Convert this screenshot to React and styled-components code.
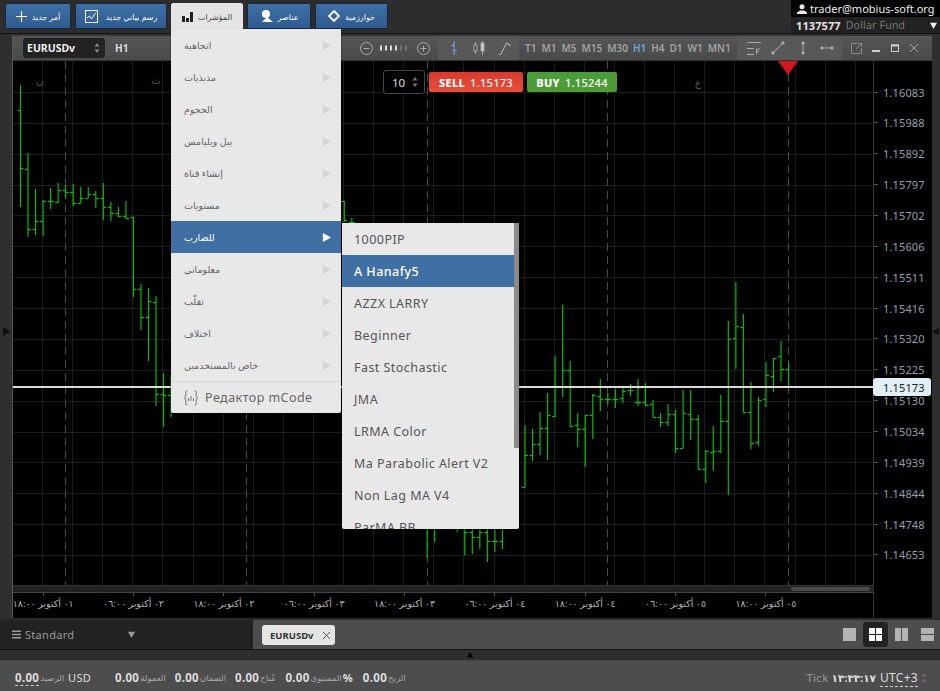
import React from "react";
import styled, { createGlobalStyle } from "styled-components";

const FONT = `"Noto Sans", "DejaVu Sans", sans-serif`;

const GlobalStyle = createGlobalStyle`
  html, body {
    margin: 0;
    padding: 0;
    background: #2b2b2b;
    font-family: ${FONT};
  }
  * { box-sizing: border-box; }
`;

const Page = styled.div`
  position: relative;
  width: 940px;
  height: 691px;
  overflow: hidden;
  display: flex;
  flex-direction: column;
  background: #2b2b2b;
`;

/* top bar */
const TopBar = styled.div`
  height: 34px;
  flex: none;
  display: flex;
  align-items: flex-start;
  gap: 4px;
  padding: 3px 0 0 5px;
  background: #2d2d2d;
  border-bottom: 1px solid #111;
`;

const TopButton = styled.div`
  width: ${p => p.$w}px;
  height: 26px;
  display: flex;
  align-items: center;
  justify-content: center;
  gap: ${p => p.$gap || 5}px;
  font-size: 8px;
  border-radius: 2px 2px 0 0;
  color: ${p => (p.$active ? "#444" : "#fff")};
  background: ${p => (p.$active ? "#e4e4e4" : "linear-gradient(#3f70a6, #2f5b8e)")};
  border: 1px solid ${p => (p.$active ? "#e4e4e4" : "#16263a")};
`;

const Account = styled.div`
  margin: -3px 0 0 auto;
  width: 149px;
  height: 33px;
  display: flex;
  flex-direction: column;
  font-size: 11px;
  white-space: nowrap;
`;

const AccountUser = styled.div`
  height: 17px;
  padding-left: 6px;
  display: flex;
  align-items: center;
  gap: 3px;
  background: #000;
  color: #eee;
`;

const AccountFund = styled.div`
  height: 16px;
  padding-left: 5px;
  display: flex;
  align-items: center;
  gap: 5px;
  background: #222;
  color: #777;
  font-size: 10.5px;
  letter-spacing: 0.2px;
  b { color: #e4e4e4; font-size: 11px; letter-spacing: 0.1px; }
  svg { margin-left: auto; margin-right: 3px; }
`;

/* chart window */
const Middle = styled.div`
  flex: none;
  height: 584px;
  display: flex;
  background: #2f2f2f;
`;

const SideStrip = styled.div`
  width: ${p => p.$w}px;
  flex: none;
  display: flex;
  align-items: center;
  justify-content: ${p => (p.$end ? "flex-end" : "center")};
  padding-top: 10px;
  border-right: ${p => (p.$end ? "0" : "1px solid #555")};
`;

const ChartWindow = styled.div`
  width: 919px;
  padding-top: 2px;
  display: flex;
  flex-direction: column;
  background: #333;
`;

const Toolbar = styled.div`
  height: 25px;
  flex: none;
  display: flex;
  background: linear-gradient(#565656, #4a4a4a);
  border-bottom: 1px solid #333;
`;

const ToolGroup = styled.div`
  width: ${p => p.$w}px;
  flex: none;
  display: flex;
  align-items: center;
  padding-left: ${p => p.$pad || 0}px;
  gap: ${p => p.$gap || 0}px;
  background: ${p => (p.$alt ? "#585858" : "transparent")};
`;

const SymbolSelect = styled.div`
  width: 82px;
  height: 20px;
  margin-left: 10px;
  padding: 0 5px 0 4px;
  display: flex;
  align-items: center;
  justify-content: space-between;
  background: #222;
  border-radius: 3px;
  color: #eee;
  font-size: 10.5px;
  font-weight: 700;
`;

const Interval = styled.span`
  margin-left: 10px;
  color: #ddd;
  font-size: 10px;
  font-weight: 700;
`;

const ZoomGroup = styled.div`
  margin-left: auto;
  margin-right: 8px;
  display: flex;
  align-items: center;
  gap: 7px;
`;

const ToolIcon = styled.div`
  width: ${p => p.$w || 24}px;
  display: flex;
  justify-content: center;
  align-items: center;
`;

const Frame = styled.span`
  color: ${p => (p.$on ? "#6ea6de" : "#a2a2a2")};
  font-size: 10px;
  font-weight: 600;
`;

const ChartGrid = styled.div`
  position: relative;
  flex: 1;
  display: grid;
  grid-template-columns: 860px 58px;
  grid-template-rows: 524px 8px 25px;
  background: #000;
`;

const Plot = styled.div`
  position: relative;
  width: 860px;
  height: 524px;
  overflow: hidden;
  svg { display: block; }
`;

const PriceAxis = styled.div`
  grid-column: 2;
  grid-row: 1 / 4;
  padding-top: 15.6px;
  border-left: 1px solid #333;
  display: flex;
  flex-direction: column;
`;

const PriceTick = styled.div`
  height: 30.87px;
  flex: none;
  display: flex;
  align-items: center;
  gap: 5px;
  color: #93a1b0;
  font-size: 11px;
  letter-spacing: 0.15px;
  &::before {
    content: "";
    width: 4px;
    height: 1px;
    background: #555;
  }
`;

const LastPrice = styled.div`
  position: absolute;
  left: 860px;
  top: 317px;
  width: 58px;
  height: 18px;
  padding-left: 10px;
  display: flex;
  align-items: center;
  background: #e0f0f6;
  border-radius: 3px;
  color: #222;
  font-size: 11px;
  letter-spacing: 0.15px;
`;

const ScrollStrip = styled.div`
  grid-column: 1;
  grid-row: 2;
  display: flex;
  align-items: center;
  justify-content: flex-end;
  padding-right: 3px;
  background: #222;
  border-top: 1px solid #333;
  border-bottom: 1px solid #444;
`;

const ScrollThumb = styled.div`
  width: 79px;
  height: 4px;
  border-radius: 2px;
  background: #4a4a4a;
`;

const TimeAxis = styled.div`
  grid-column: 1;
  grid-row: 3;
  display: flex;
  margin-left: -15px;
  overflow: hidden;
`;

const TimeTick = styled.div`
  width: 90.35px;
  flex: none;
  display: flex;
  flex-direction: column;
  align-items: center;
  gap: 1px;
  color: #b5b5b5;
  font-size: 9.5px;
  letter-spacing: 0.2px;
  white-space: nowrap;
  &::before {
    content: "";
    width: 1px;
    height: 3px;
    background: #555;
  }
`;

const TradeBar = styled.div`
  position: absolute;
  left: 370px;
  top: 9px;
  display: flex;
  align-items: center;
  gap: 4px;
`;

const LotInput = styled.div`
  width: 42px;
  height: 24px;
  padding: 0 6px 0 8px;
  display: flex;
  align-items: center;
  justify-content: space-between;
  border: 1px solid #444;
  border-radius: 3px;
  background: #000;
  color: #ddd;
  font-size: 11.5px;
`;

const TradeButton = styled.div`
  width: ${p => p.$w}px;
  height: 20px;
  display: flex;
  align-items: center;
  justify-content: center;
  gap: 5px;
  border-radius: 2px;
  color: #fff;
  font-size: 11px;
  font-weight: 500;
  letter-spacing: 0.3px;
  background: ${p => p.$bg};
  b { font-weight: 800; }
`;

/* dropdown menus */
const Menu = styled.div`
  position: absolute;
  left: 171px;
  top: 29px;
  width: 170px;
  background: #e8e8e8;
  border-radius: 0 0 2px 2px;
  box-shadow: 0 1px 2px rgba(0, 0, 0, 0.5);
`;

const MenuItem = styled.div`
  height: 32px;
  padding: 0 10px 0 13px;
  display: flex;
  align-items: center;
  justify-content: space-between;
  font-size: 9.5px;
  color: ${p => (p.$active ? "#fff" : "#666")};
  background: ${p => (p.$active ? "#3f6fa3" : "transparent")};
`;

const EditorItem = styled.div`
  height: 32px;
  padding-left: 12px;
  display: flex;
  align-items: center;
  gap: 6px;
  border-top: 1px solid #d6d6d6;
  color: #666;
  font-size: 12.5px;
  letter-spacing: 0.45px;
`;

const SubMenu = styled.div`
  position: absolute;
  left: 342px;
  top: 223px;
  width: 177px;
  height: 306px;
  overflow: hidden;
  background: #e8e8e8;
  border-radius: 0 0 2px 2px;
  box-shadow: 0 1px 2px rgba(0, 0, 0, 0.5);
`;

const SubItem = styled.div`
  height: 32px;
  width: 172px;
  padding-left: 12px;
  display: flex;
  align-items: center;
  font-size: 12.5px;
  letter-spacing: 0.45px;
  color: ${p => (p.$active ? "#fff" : "#555")};
  font-weight: ${p => (p.$active ? 500 : 400)};
  background: ${p => (p.$active ? "#3f6fa3" : "transparent")};
`;

const SubScroll = styled.div`
  position: absolute;
  right: 0;
  top: 0;
  width: 5px;
  height: 225px;
  background: #8a8a8a;
`;

/* bottom */
const TabBar = styled.div`
  height: 31px;
  flex: none;
  display: flex;
  border-top: 2px solid #2a2a2a;
  background: #4d4d4d;
`;

const TemplatePicker = styled.div`
  width: 253px;
  padding-left: 12px;
  display: flex;
  align-items: center;
  gap: 4px;
  background: #222;
  color: #999;
  font-size: 11px;
  letter-spacing: 0.3px;
  svg:last-child { margin-left: 50px; }
`;

const Tab = styled.div`
  width: 73px;
  height: 20px;
  margin: 5px 0 0 9px;
  padding: 0 4px 0 8px;
  display: flex;
  align-items: center;
  justify-content: space-between;
  border-radius: 3px;
  background: #e4e4e4;
  color: #333;
  font-size: 9.5px;
  font-weight: 700;
`;

const LayoutIcons = styled.div`
  margin-left: auto;
  display: flex;
  align-items: center;
  gap: 1px;
`;

const LayoutButton = styled.div`
  width: 25px;
  height: 25px;
  display: flex;
  align-items: center;
  justify-content: center;
  border-radius: 3px;
  background: ${p => (p.$on ? "#222" : "transparent")};
`;

const Splitter = styled.div`
  height: 12px;
  flex: none;
  display: flex;
  justify-content: center;
  padding-top: 2px;
  background: #2d2d2d;
  border-top: 1px solid #111;
  border-bottom: 1px solid #444;
`;

const Footer = styled.div`
  flex: 1;
  display: flex;
  align-items: center;
  padding: 3px 13px 0 15px;
  background: #4d4d4d;
  color: #a8a8a8;
  font-size: 11px;
`;

const Stat = styled.div`
  display: flex;
  align-items: center;
  margin-right: ${p => p.$gap}px;
  font-size: 8.5px;
  gap: 1px;
`;

const Value = styled.b`
  color: #ddd;
  font-size: 11.5px;
  font-weight: 700;
  letter-spacing: 0.3px;
  border-bottom: ${p => (p.$dotted ? "1px dashed #ccc" : "0")};
`;

const Unit = styled.span`
  margin-left: ${p => p.$gap || 0}px;
  color: #ddd;
  font-size: 11px;
  letter-spacing: 0.3px;
  font-weight: ${p => (p.$bold ? 700 : 400)};
`;

const Clock = styled.div`
  margin-left: auto;
  display: flex;
  align-items: center;
  gap: 3px;
  font-size: 11.5px;
  letter-spacing: 0.3px;
  color: #999;
  b { color: #ddd; font-size: 10.5px; }
`;

const Zone = styled.span`
  margin-left: 1px;
  color: #ddd;
  font-size: 12px;
  border-bottom: 1px dashed #ccc;
`;

const GREEN = "#00c400";
const BAR_STEP = 7.53;

// x, high, low, open, close in page pixels
const BARS = [
  [20, 85, 207, 110, 168], [27.5, 153, 237, 169, 229], [35, 189, 235, 229, 221],
  [42.5, 200, 236, 221, 201], [50, 188, 209, 201, 201], [57.5, 183, 203, 202, 190],
  [65, 185, 198, 190, 192], [72.5, 184, 206, 192, 203], [80, 187, 203, 203, 198],
  [87.5, 187, 198, 198, 194], [95, 191, 208, 194, 198], [102.5, 183, 220, 198, 207],
  [110, 202, 221, 207, 213], [117.5, 207, 217, 213, 216], [125, 201, 219, 216, 218],
  [132.5, 217, 297, 217, 289], [140, 284, 330, 289, 317], [147.5, 288, 361, 317, 301],
  [155, 296, 406, 302, 394], [162.5, 373, 427, 394, 395], [170, 375, 417, 395, 393],
  [343, 201, 222, 201, 220], [350, 218, 230, 222, 222],
  [427, 500, 558, 520, 515], [434, 510, 542, 515, 520], [457, 510, 532, 525, 528],
  [464, 500, 555, 528, 532], [472, 510, 554, 532, 537], [479, 510, 549, 537, 532],
  [487, 510, 562, 532, 541], [494, 510, 552, 541, 541], [502, 510, 549, 541, 520],
  [524, 425, 487, 487, 455], [532, 429, 461, 455, 444], [539.5, 412, 455, 444, 428],
  [547, 393, 460, 428, 415], [554.5, 356, 417, 416, 386], [562, 305, 397, 386, 370],
  [570, 361, 427, 370, 426], [577, 413, 447, 425, 429], [585, 415, 467, 429, 415],
  [592, 394, 439, 415, 395], [600, 379, 411, 396, 399], [607, 393, 404, 399, 399],
  [615, 389, 408, 399, 399], [622, 387, 403, 398, 391], [630, 384, 396, 390, 390],
  [637, 379, 406, 402, 402], [645, 383, 406, 402, 405], [652, 400, 417, 404, 417],
  [660, 413, 427, 417, 422], [667, 404, 426, 422, 414], [675, 410, 453, 414, 448],
  [683, 390, 448, 448, 413], [690, 390, 440, 414, 419], [697, 415, 469, 419, 469],
  [705, 450, 483, 469, 451], [713, 426, 471, 452, 451], [720, 395, 453, 451, 421],
  [728, 321, 495, 421, 339], [735, 282, 369, 338, 326], [743, 314, 413, 327, 412],
  [750, 382, 449, 412, 443], [758, 397, 446, 442, 400], [765, 362, 407, 399, 375],
  [773, 358, 392, 376, 358], [780, 341, 381, 356, 369], [788, 362, 387, 369, 387]
];

const PRICES = [
  "1.16083", "1.15988", "1.15892", "1.15797", "1.15702", "1.15606", "1.15511", "1.15416",
  "1.15320", "1.15225", "1.15130", "1.15034", "1.14939", "1.14844", "1.14748", "1.14653"
];

const TIMES = [
  "٠١ أكتوبر ١٨:٠٠", "٠٢ أكتوبر ٠٦:٠٠", "٠٢ أكتوبر ١٨:٠٠", "٠٣ أكتوبر ٠٦:٠٠", "٠٣ أكتوبر ١٨:٠٠",
  "٠٤ أكتوبر ٠٦:٠٠", "٠٤ أكتوبر ١٨:٠٠", "٠٥ أكتوبر ٠٦:٠٠", "٠٥ أكتوبر ١٨:٠٠"
];

const INDICATORS = [
  "اتجاهية", "مذبذبات", "الحجوم", "بيل ويليامس", "إنشاء قناة", "مستويات",
  "للضارب", "معلوماتي", "تقلّب", "اختلاف", "خاص بالمستخدمين"
];

const SUBITEMS = [
  "1000PIP", "A Hanafy5", "AZZX LARRY", "Beginner", "Fast Stochastic", "JMA",
  "LRMA Color", "Ma Parabolic Alert V2", "Non Lag MA V4", "ParMA BB"
];

const FRAMES = ["T1", "M1", "M5", "M15", "M30", "H1", "H4", "D1", "W1", "MN1"];

const Spinner = ({ color = "#888" }) => (
  <svg width="6" height="12" viewBox="0 0 6 12">
    <path d="M3 1 L5.5 4.5 H0.5 Z M3 11 L0.5 7.5 H5.5 Z" fill={color} />
  </svg>
);

const Arrow = ({ size = 9, color = "#ccc", dir = "right" }) => {
  const rot = { right: 0, down: 90, up: -90, left: 180 }[dir];
  return (
    <svg width={size} height={size} viewBox="0 0 10 10" style={{ transform: `rotate(${rot}deg)` }}>
      <path d="M1 0 L10 5 L1 10 Z" fill={color} />
    </svg>
  );
};

const Chart = () => {
  const verticals = Array.from({ length: 28 }, (_, i) => Math.round(42 + i * 30.1) + 0.5);
  const horizontals = Array.from({ length: 17 }, (_, i) => Math.round(92 + i * 30.87) + 0.5);
  const dashed = [65, 246, 427, 607, 788];
  return (
    <svg width="860" height="524" viewBox="13 61 860 524">
      {verticals.map(x => (
        <line key={x} x1={x} x2={x} y1="61" y2="585" stroke="#1d1d1d" />
      ))}
      {horizontals.map(y => (
        <line key={y} x1="13" x2="873" y1={y} y2={y} stroke="#1d1d1d" />
      ))}
      {dashed.map(x => (
        <line key={x} x1={x + 0.5} x2={x + 0.5} y1="61" y2="585" stroke="#4a4a4a" strokeDasharray="8 5" />
      ))}
      <g fontSize="10" fill="#5a5a5a" fontFamily={FONT}>
        <text x="40" y="84" textAnchor="middle">ن</text>
        <text x="156" y="84" textAnchor="middle">ث</text>
        <text x="698" y="86" textAnchor="middle">ع</text>
      </g>
      {BARS.map(([x, hi, lo, open, close]) => {
        // bars sit on a fractional step, so some blur over two pixels as in the real chart
        const px = 20.5 + Math.round((x - 20) / BAR_STEP) * BAR_STEP;
        return (
          <g key={x} stroke={GREEN} strokeWidth="1.15">
            <line x1={px} x2={px} y1={hi} y2={lo} />
            <line x1={px - 3} x2={px} y1={open + 0.5} y2={open + 0.5} />
            <line x1={px} x2={px + 3} y1={close + 0.5} y2={close + 0.5} />
          </g>
        );
      })}
      <rect x="13" y="386" width="860" height="2" fill="#dcdcdc" />
      <path d="M778 61 H798 L788 75 Z" fill="#d2161c" />
    </svg>
  );
};

const IconPlus = () => (
  <svg width="11" height="11" viewBox="0 0 11 11">
    <path d="M5.5 0 V11 M0 5.5 H11" stroke="#fff" strokeWidth="1.2" />
  </svg>
);

const IconChart = () => (
  <svg width="13" height="13" viewBox="0 0 13 13" fill="none" stroke="#fff">
    <rect x="0.5" y="0.5" width="12" height="12" />
    <path d="M2 8 L4.5 6 L6.5 9 L10.5 3" />
  </svg>
);

const IconBars = () => (
  <svg width="11" height="11" viewBox="0 0 11 11" fill="#222">
    <rect x="0" y="5" width="3" height="6" />
    <rect x="4" y="7" width="3" height="4" />
    <rect x="8" y="1" width="3" height="10" />
  </svg>
);

const IconShapes = () => (
  <svg width="13" height="12" viewBox="0 0 13 12" fill="#fff">
    <circle cx="6" cy="4" r="4" />
    <path d="M7 7 L13 12 H2 Z" />
  </svg>
);

const IconDiamond = () => (
  <svg width="12" height="12" viewBox="0 0 12 12" fill="none" stroke="#fff" strokeWidth="1.8">
    <path d="M6 1 L11 6 L6 11 L1 6 Z" />
  </svg>
);

const IconUser = () => (
  <svg width="10" height="10" viewBox="0 0 10 10" fill="#eee">
    <circle cx="5" cy="2.7" r="2.5" />
    <path d="M0 10 V8.5 L3 6.5 H7 L10 8.5 V10 Z" />
  </svg>
);

const CircleBtn = ({ plus }) => (
  <svg width="13" height="13" viewBox="0 0 13 13" fill="none" stroke="#aaa">
    <circle cx="6.5" cy="6.5" r="6" />
    <path d={plus ? "M3.5 6.5 H9.5 M6.5 3.5 V9.5" : "M3.5 6.5 H9.5"} />
  </svg>
);

const ZoomDots = () => (
  <svg width="30" height="6" viewBox="0 0 30 6">
    {[0, 5, 10, 15, 20, 25].map((x, i) => (
      <rect key={x} x={x} y="0.5" width="2" height="5" fill={i > 3 ? "#777" : "#ddd"} />
    ))}
  </svg>
);

const TypeIcons = () => (
  <>
    <ToolIcon $w={25}>
      <svg width="10" height="14" viewBox="0 0 10 14" fill="none" stroke="#6ea6de" strokeWidth="1.2">
        <path d="M5 0 V14 M2 4.5 H5 M5 9.5 H8" />
      </svg>
    </ToolIcon>
    <ToolIcon $w={26}>
      <svg width="12" height="14" viewBox="0 0 12 14" fill="none" stroke="#aaa">
        <path d="M2.5 1 V13 M9.5 0 V14" />
        <rect x="1" y="4" width="3" height="6" fill="#4a4a4a" />
        <rect x="8" y="2" width="3" height="8" fill="#ccc" />
      </svg>
    </ToolIcon>
    <ToolIcon $w={24}>
      <svg width="13" height="13" viewBox="0 0 13 13" fill="none" stroke="#aaa" strokeWidth="1.2">
        <path d="M0.5 12.5 L3 12 L8 2 L9 1 L12.5 4" />
      </svg>
    </ToolIcon>
  </>
);

const DrawIcons = () => (
  <>
    <ToolIcon $w={24}>
      <svg width="14" height="13" viewBox="0 0 14 13" fill="none" stroke="#aaa">
        <path d="M0 0.5 H14 M0 6.5 H7 M0 12.5 H7" />
        <path d="M9.5 12 V7 H13 M9.5 9.5 H12" />
      </svg>
    </ToolIcon>
    <ToolIcon $w={24}>
      <svg width="14" height="14" viewBox="0 0 14 14" fill="#aaa" stroke="#aaa">
        <path d="M2 12 L12 2" />
        <circle cx="2" cy="12" r="1.2" />
        <circle cx="12" cy="2" r="1.2" />
      </svg>
    </ToolIcon>
    <ToolIcon $w={26}>
      <svg width="6" height="14" viewBox="0 0 6 14" fill="#aaa" stroke="#aaa">
        <path d="M3 1 V13" />
        <circle cx="3" cy="2" r="1.2" />
        <circle cx="3" cy="12" r="1.2" />
      </svg>
    </ToolIcon>
    <ToolIcon $w={22}>
      <svg width="14" height="6" viewBox="0 0 14 6" fill="#aaa" stroke="#aaa">
        <path d="M1 3 H13" />
        <circle cx="2" cy="3" r="1.2" />
        <circle cx="12" cy="3" r="1.2" />
      </svg>
    </ToolIcon>
  </>
);

const WindowIcons = () => (
  <>
    <ToolIcon $w={19}>
      <svg width="11" height="11" viewBox="0 0 11 11" fill="none" stroke="#8a8a8a">
        <path d="M6 0.5 H0.5 V10.5 H10.5 V5 M5 6 L10.5 0.5 M7 0.5 H10.5 V4" />
      </svg>
    </ToolIcon>
    <ToolIcon $w={19}>
      <svg width="8" height="8" viewBox="0 0 8 8">
        <rect x="0" y="6" width="8" height="2" fill="#ccc" />
      </svg>
    </ToolIcon>
    <ToolIcon $w={19}>
      <svg width="8" height="8" viewBox="0 0 8 8" fill="none" stroke="#ccc">
        <rect x="0.5" y="1" width="7" height="6.5" />
        <path d="M0 1.5 H8" strokeWidth="2" />
      </svg>
    </ToolIcon>
    <ToolIcon $w={19}>
      <svg width="8" height="8" viewBox="0 0 8 8" stroke="#aaa" strokeWidth="0.9">
        <path d="M0 0 L8 8 M8 0 L0 8" />
      </svg>
    </ToolIcon>
  </>
);

const IconCode = () => (
  <svg width="16" height="16" viewBox="0 0 16 16" fill="none" stroke="#777">
    <path d="M4.5 1 H3.8 C2.8 1 2.8 2 2.8 3 V6 C2.8 7 2.2 8 1 8 C2.2 8 2.8 9 2.8 10 V13 C2.8 14 2.8 15 3.8 15 H4.5" />
    <path d="M11.5 1 H12.2 C13.2 1 13.2 2 13.2 3 V6 C13.2 7 13.8 8 15 8 C13.8 8 13.2 9 13.2 10 V13 C13.2 14 13.2 15 12.2 15 H11.5" />
    <path d="M5.5 8 V11 M8 6 V11 M10.5 8 V11" />
  </svg>
);

const LayoutIcon = ({ kind, color }) => {
  const rects = {
    one: [[0, 0, 12, 12]],
    four: [[0, 0, 5.5, 5.5], [6.5, 0, 5.5, 5.5], [0, 6.5, 5.5, 5.5], [6.5, 6.5, 5.5, 5.5]],
    cols: [[0, 0, 5.5, 12], [6.5, 0, 5.5, 12]],
    rows: [[0, 0, 12, 5.5], [0, 6.5, 12, 5.5]]
  }[kind];
  return (
    <svg width="13" height="13" viewBox="0 0 12 12" fill={color}>
      {rects.map(([x, y, w, h]) => (
        <rect key={`${x}-${y}`} x={x} y={y} width={w} height={h} />
      ))}
    </svg>
  );
};

const App = () => (
  <Page>
    <GlobalStyle />
    <TopBar>
      <TopButton $w={66}><IconPlus /><span>أمر جديد</span></TopButton>
      <TopButton $w={92} $gap={8}><IconChart /><span>رسم بياني جديد</span></TopButton>
      <TopButton $w={72} $active><IconBars /><span>المؤشرات</span></TopButton>
      <TopButton $w={64}><IconShapes /><span>عناصر</span></TopButton>
      <TopButton $w={73}><IconDiamond /><span>خوارزمية</span></TopButton>
      <Account>
        <AccountUser><IconUser />trader@mobius-soft.org</AccountUser>
        <AccountFund>
          <b>1137577</b>Dollar Fund
          <Arrow size={7} color="#eee" dir="down" />
        </AccountFund>
      </Account>
    </TopBar>

    <Middle>
      <SideStrip $w={13}><Arrow size={9} color="#111" /></SideStrip>
      <ChartWindow>
        <Toolbar>
          <ToolGroup $w={425}>
            <SymbolSelect>EURUSDv<Spinner /></SymbolSelect>
            <Interval>H1</Interval>
            <ZoomGroup><CircleBtn /><ZoomDots /><CircleBtn plus /></ZoomGroup>
          </ToolGroup>
          <ToolGroup $w={81} $alt $pad={3}><TypeIcons /></ToolGroup>
          <ToolGroup $w={218} $pad={6} $gap={5}>
            {FRAMES.map(f => <Frame key={f} $on={f === "H1"}>{f}</Frame>)}
          </ToolGroup>
          <ToolGroup $w={105} $alt $pad={5}><DrawIcons /></ToolGroup>
          <ToolGroup $w={89} $pad={5}><WindowIcons /></ToolGroup>
        </Toolbar>
        <ChartGrid>
          <Plot>
            <Chart />
            <TradeBar>
              <LotInput>10<Spinner color="#777" /></LotInput>
              <TradeButton $w={94} $bg="linear-gradient(#d63a30, #e84e38)"><b>SELL</b>1.15173</TradeButton>
              <TradeButton $w={90} $bg="linear-gradient(#4a9d3c, #4f9a33)"><b>BUY</b>1.15244</TradeButton>
            </TradeBar>
          </Plot>
          <PriceAxis>
            {PRICES.map(p => <PriceTick key={p}>{p}</PriceTick>)}
          </PriceAxis>
          <LastPrice>1.15173</LastPrice>
          <ScrollStrip><ScrollThumb /></ScrollStrip>
          <TimeAxis>
            {TIMES.map(t => <TimeTick key={t}><span dir="ltr">{t}</span></TimeTick>)}
          </TimeAxis>
        </ChartGrid>
      </ChartWindow>
      <SideStrip $w={8} $end><Arrow size={9} color="#111" dir="left" /></SideStrip>
    </Middle>

    <TabBar>
      <TemplatePicker>
        <svg width="9" height="9" viewBox="0 0 9 9" fill="#999">
          <rect y="0.5" width="9" height="1.5" /><rect y="3.75" width="9" height="1.5" /><rect y="7" width="9" height="1.5" />
        </svg>
        <span>Standard</span>
        <Arrow size={7} color="#999" dir="down" />
      </TemplatePicker>
      <Tab>
        EURUSDv
        <svg width="9" height="9" viewBox="0 0 9 9" stroke="#555" strokeWidth="1">
          <path d="M1 1 L8 8 M8 1 L1 8" />
        </svg>
      </Tab>
      <LayoutIcons>
        <LayoutButton><LayoutIcon kind="one" color="#b4b4b4" /></LayoutButton>
        <LayoutButton $on><LayoutIcon kind="four" color="#fff" /></LayoutButton>
        <LayoutButton><LayoutIcon kind="cols" color="#b4b4b4" /></LayoutButton>
        <LayoutButton><LayoutIcon kind="rows" color="#b4b4b4" /></LayoutButton>
      </LayoutIcons>
    </TabBar>

    <Splitter><Arrow size={6} color="#000" dir="up" /></Splitter>

    <Footer>
      <Stat $gap={24}><Value $dotted>0.00</Value><span>الرصيد</span><Unit $gap={3}>USD</Unit></Stat>
      <Stat $gap={9}><Value>0.00</Value><span>العمولة</span></Stat>
      <Stat $gap={9}><Value>0.00</Value><span>الضمان</span></Stat>
      <Stat $gap={10}><Value>0.00</Value><span>مُتاح</span></Stat>
      <Stat $gap={10}><Value>0.00</Value><span>المستوى</span><Unit $bold>%</Unit></Stat>
      <Stat $gap={10}><Value>0.00</Value><span>الربح</span></Stat>
      <Clock>
        Tick <b dir="ltr">١٣:٣٣:١٧</b>
        <Zone>UTC+3</Zone>
        <Spinner color="#6a6a6a" />
      </Clock>
    </Footer>

    <Menu>
      {INDICATORS.map(label => (
        <MenuItem key={label} $active={label === "للضارب"}>
          <span>{label}</span>
          <Arrow size={9} color={label === "للضارب" ? "#fff" : "#d4d4d4"} />
        </MenuItem>
      ))}
      <EditorItem><IconCode />Редактор mCode</EditorItem>
    </Menu>

    <SubMenu>
      {SUBITEMS.map(name => <SubItem key={name} $active={name === "A Hanafy5"}>{name}</SubItem>)}
      <SubScroll />
    </SubMenu>
  </Page>
);

export default App;
